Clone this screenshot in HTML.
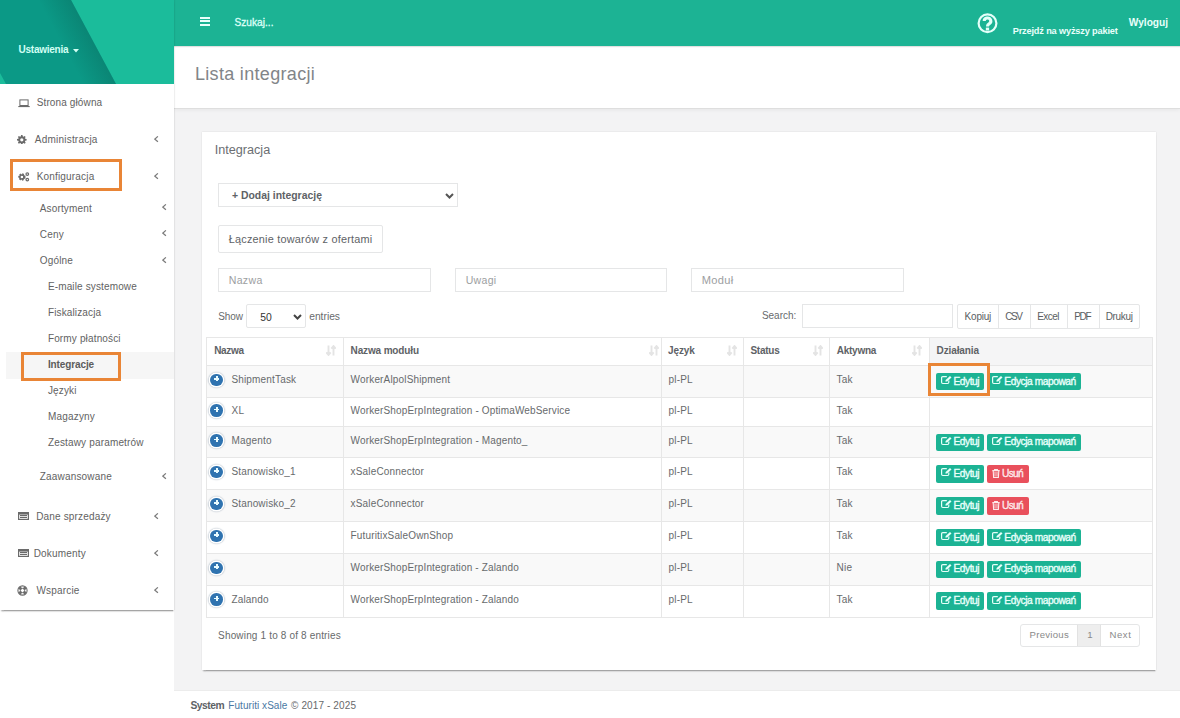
<!DOCTYPE html><html><head><meta charset="utf-8"><style>
*{box-sizing:border-box;margin:0;padding:0}
html,body{width:1180px;height:718px;overflow:hidden;background:#fff;font-family:"Liberation Sans",sans-serif;color:#676a6c}
.t{position:absolute;white-space:nowrap;line-height:1}
.r{position:absolute}
#side{position:absolute;left:0;top:0;width:174px;height:610px;background:#fff;box-shadow:0 2px 1.5px -0.5px rgba(0,0,0,.35),1px 0 1px rgba(0,0,0,.05);z-index:5}
#sidehead{position:absolute;left:0;top:0;width:174px;height:84px;background:#1bbc9b;overflow:hidden}
#top{position:absolute;left:174px;top:0;width:1006px;height:46px;background:#1cb394;box-shadow:0 1px 1px rgba(0,0,0,.12);z-index:3}
#phead{position:absolute;left:174px;top:46px;width:1006px;height:63px;background:#fff;border-bottom:1px solid #dedede;box-shadow:0 1px 4px rgba(0,0,0,.06);z-index:2}
#gray{position:absolute;left:174px;top:108px;width:1006px;height:582px;background:#f3f3f4}
#foot{position:absolute;left:174px;top:690px;width:1006px;height:28px;background:#fff;border-top:1px solid #ececec}
#card{position:absolute;left:202px;top:132px;width:954px;height:538px;background:#fff;box-shadow:0 2px 1.5px -0.5px rgba(0,0,0,.3),0 0 1.5px rgba(0,0,0,.13)}
.bx{position:absolute;border:1px solid #e5e6e7;background:#fff}
.ob{position:absolute;border:3px solid #e98536}
.chev{position:absolute}
.btn{position:absolute;height:17.6px;border-radius:2px;background:#1cb394}
.btnr{background:#e9505c}

.hl{position:absolute;height:1px;background:#e7e7e7}
.vl{position:absolute;width:1px;background:#e7e7e7}
</style></head><body><div id="gray"></div><div id="foot"></div><div id="top"></div><div id="phead"></div>
<div id="side"><div id="sidehead">
<svg width="174" height="84" style="position:absolute;left:0;top:0">
<defs><linearGradient id="g1" gradientUnits="userSpaceOnUse" x1="68" y1="55.7" x2="93.5" y2="42"><stop offset="0" stop-color="#0a6e60" stop-opacity="0"/><stop offset="1" stop-color="#0a6e60" stop-opacity="0.45"/></linearGradient></defs>
<polygon points="0,0 71,0 116,84 6,84 0,73" fill="#0b9986"/><polygon points="0,0 71,0 116,84 6,84 0,73" fill="url(#g1)"/></svg>
<div class="t" style="left:18.60px;top:44.90px;font-size:10.00px;color:#d2fff4;font-weight:bold;letter-spacing:-0.261px;">Ustawienia</div>
<svg class="r" style="left:73.2px;top:48.5px" width="6" height="4"><polygon points="0,0 6,0 3,3.5" fill="#d2fff4"/></svg>
</div>
<div class="t" style="left:36.70px;top:98.20px;font-size:10.00px;color:#626262;letter-spacing:0.129px;">Strona główna</div>
<svg class="r" style="left:17.5px;top:98.5px" width="12" height="9"><rect x="1.9" y="0.9" width="8.2" height="5.6" fill="none" stroke="#6b6b6b" stroke-width="1"/><rect x="0.3" y="7" width="11.4" height="1.1" fill="#6b6b6b"/></svg>
<div class="t" style="left:34.80px;top:135.20px;font-size:10.02px;color:#626262;letter-spacing:0.209px;">Administracja</div>
<svg class="r" style="left:17.4px;top:134.6px" width="9.6" height="9.6" viewBox="0 0 16 16"><path fill="#6b6b6b" d="M6.8 0h2.4l.4 2.2 1.3.6 1.9-1.3 1.7 1.7-1.3 1.9.6 1.3 2.2.4v2.4l-2.2.4-.6 1.3 1.3 1.9-1.7 1.7-1.9-1.3-1.3.6-.4 2.2H6.8l-.4-2.2-1.3-.6-1.9 1.3-1.7-1.7 1.3-1.9-.6-1.3L0 9.2V6.8l2.2-.4.6-1.3-1.3-1.9 1.7-1.7 1.9 1.3 1.3-.6zM8 5.3A2.7 2.7 0 1 0 8 10.7 2.7 2.7 0 1 0 8 5.3z"/></svg>
<svg class="r" style="left:154px;top:136px" width="5" height="7"><polyline points="3.9,0.4 0.9,3.1 3.9,5.8" fill="none" stroke="#7a7a7a" stroke-width="1.25"/></svg>
<div class="t" style="left:36.70px;top:171.80px;font-size:10.00px;color:#626262;letter-spacing:0.177px;">Konfiguracja</div>
<svg class="r" style="left:17.6px;top:171.5px" width="12" height="10" viewBox="0 0 12 10"><circle cx="3.9" cy="5" r="2.55" fill="none" stroke="#6b6b6b" stroke-width="2.2" stroke-dasharray="1.45 0.95"/><circle cx="3.9" cy="5" r="2.1" fill="none" stroke="#6b6b6b" stroke-width="1.5"/><circle cx="9.3" cy="2.1" r="1.3" fill="none" stroke="#6b6b6b" stroke-width="1.2"/><circle cx="9.3" cy="7.6" r="1.3" fill="none" stroke="#6b6b6b" stroke-width="1.2"/></svg>
<svg class="r" style="left:154px;top:173px" width="5" height="7"><polyline points="3.9,0.4 0.9,3.1 3.9,5.8" fill="none" stroke="#7a7a7a" stroke-width="1.25"/></svg>
<div class="t" style="left:39.70px;top:203.90px;font-size:10.00px;color:#626262;letter-spacing:0.169px;">Asortyment</div>
<svg class="r" style="left:162px;top:204px" width="5" height="7"><polyline points="3.9,0.4 0.9,3.1 3.9,5.8" fill="none" stroke="#7a7a7a" stroke-width="1.25"/></svg>
<div class="t" style="left:39.70px;top:229.90px;font-size:10.00px;color:#626262;letter-spacing:0.233px;">Ceny</div>
<svg class="r" style="left:162px;top:230px" width="5" height="7"><polyline points="3.9,0.4 0.9,3.1 3.9,5.8" fill="none" stroke="#7a7a7a" stroke-width="1.25"/></svg>
<div class="t" style="left:39.70px;top:256.00px;font-size:10.00px;color:#626262;letter-spacing:0.194px;">Ogólne</div>
<svg class="r" style="left:162px;top:257px" width="5" height="7"><polyline points="3.9,0.4 0.9,3.1 3.9,5.8" fill="none" stroke="#7a7a7a" stroke-width="1.25"/></svg>
<div class="r" style="left:6px;top:352px;width:168px;height:27px;background:#f6f6f6"></div>
<div class="t" style="left:47.90px;top:281.70px;font-size:10.00px;color:#626262;letter-spacing:0.138px;">E-maile systemowe</div>
<div class="t" style="left:47.90px;top:307.90px;font-size:10.00px;color:#626262;letter-spacing:0.141px;">Fiskalizacja</div>
<div class="t" style="left:47.90px;top:334.20px;font-size:10.00px;color:#626262;letter-spacing:0.151px;">Formy płatności</div>
<div class="t" style="left:47.90px;top:360.20px;font-size:10.00px;color:#5c5c5c;font-weight:bold;letter-spacing:-0.106px;">Integracje</div>
<div class="t" style="left:47.90px;top:386.10px;font-size:10.00px;color:#626262;letter-spacing:0.167px;">Języki</div>
<div class="t" style="left:47.90px;top:412.20px;font-size:10.00px;color:#626262;letter-spacing:0.195px;">Magazyny</div>
<div class="t" style="left:47.90px;top:437.90px;font-size:10.00px;color:#626262;letter-spacing:0.164px;">Zestawy parametrów</div>
<div class="t" style="left:39.70px;top:472.00px;font-size:10.00px;color:#626262;letter-spacing:0.191px;">Zaawansowane</div>
<svg class="r" style="left:162px;top:473px" width="5" height="7"><polyline points="3.9,0.4 0.9,3.1 3.9,5.8" fill="none" stroke="#7a7a7a" stroke-width="1.25"/></svg>
<div class="t" style="left:36.20px;top:512.00px;font-size:10.00px;color:#626262;letter-spacing:0.167px;">Dane sprzedaży</div>
<svg class="r" style="left:17.5px;top:512px" width="11" height="8"><rect x="0.6" y="0.6" width="9.8" height="6.8" fill="none" stroke="#6b6b6b" stroke-width="1.2"/><rect x="2" y="3" width="7" height="1.2" fill="#6b6b6b"/><rect x="2" y="5" width="7" height="1" fill="#6b6b6b"/><rect x="0.6" y="0.6" width="9.8" height="2" fill="#6b6b6b"/></svg>
<svg class="r" style="left:154px;top:513px" width="5" height="7"><polyline points="3.9,0.4 0.9,3.1 3.9,5.8" fill="none" stroke="#7a7a7a" stroke-width="1.25"/></svg>
<div class="t" style="left:33.70px;top:549.00px;font-size:10.00px;color:#626262;letter-spacing:0.190px;">Dokumenty</div>
<svg class="r" style="left:17.5px;top:549px" width="11" height="8"><rect x="0.6" y="0.6" width="9.8" height="6.8" fill="none" stroke="#6b6b6b" stroke-width="1.2"/><rect x="2" y="3" width="7" height="1.2" fill="#6b6b6b"/><rect x="2" y="5" width="7" height="1" fill="#6b6b6b"/><rect x="0.6" y="0.6" width="9.8" height="2" fill="#6b6b6b"/></svg>
<svg class="r" style="left:154px;top:550px" width="5" height="7"><polyline points="3.9,0.4 0.9,3.1 3.9,5.8" fill="none" stroke="#7a7a7a" stroke-width="1.25"/></svg>
<div class="t" style="left:36.50px;top:586.00px;font-size:10.00px;color:#626262;letter-spacing:0.179px;">Wsparcie</div>
<svg class="r" style="left:17.4px;top:584.8px" width="11" height="11" viewBox="0 0 11 11"><circle cx="5.5" cy="5.5" r="4.6" fill="none" stroke="#6b6b6b" stroke-width="1.1"/><circle cx="5.5" cy="5.5" r="2.1" fill="none" stroke="#6b6b6b" stroke-width="1"/><path d="M2.2 2.2l2 2M8.8 2.2l-2 2M2.2 8.8l2-2M8.8 8.8l-2-2" stroke="#6b6b6b" stroke-width="2.9"/></svg>
<svg class="r" style="left:154px;top:587px" width="5" height="7"><polyline points="3.9,0.4 0.9,3.1 3.9,5.8" fill="none" stroke="#7a7a7a" stroke-width="1.25"/></svg>
<div class="ob" style="left:10px;top:159px;width:112px;height:32px"></div>
<div class="ob" style="left:21px;top:352px;width:100px;height:28.5px"></div>
</div>
<div class="r" style="left:200px;top:17px;width:10.3px;height:2px;background:#e9fffb;z-index:4"></div>
<div class="r" style="left:200px;top:20.3px;width:10.3px;height:2px;background:#e9fffb;z-index:4"></div>
<div class="r" style="left:200px;top:23.5px;width:10.3px;height:2px;background:#e9fffb;z-index:4"></div>
<div style="position:absolute;left:0;top:0;z-index:4">
<div class="t" style="left:234.50px;top:17.80px;font-size:10.17px;color:#ddfff7;-webkit-text-stroke:0.3px #ddfff7;">Szukaj...</div>
<svg class="r" style="left:977px;top:13px" width="21" height="21" viewBox="0 0 21 21"><circle cx="10.5" cy="10.3" r="8.9" fill="none" stroke="#e4fff9" stroke-width="2.2"/><path d="M7.2 8.1a3.3 3.1 0 1 1 4.9 2.7c-1 .55-1.55 1.05-1.55 2.1v.5" fill="none" stroke="#e4fff9" stroke-width="3.1"/><rect x="8.85" y="14.6" width="3.3" height="2.9" fill="#e4fff9"/></svg>
<div class="t" style="left:1012.70px;top:26.60px;font-size:9.20px;color:#e9fffb;font-weight:bold;letter-spacing:-0.158px;">Przejdź na wyższy pakiet</div>
<div class="t" style="left:1128.80px;top:17.80px;font-size:10.16px;color:#e9fffb;font-weight:bold;">Wyloguj</div>
</div>
<div style="position:absolute;left:0;top:0;z-index:4">
<div class="t" style="left:194.90px;top:64.80px;font-size:18.03px;color:#828588;letter-spacing:0.320px;">Lista integracji</div>
</div>
<div id="card"></div>
<div class="t" style="left:214.70px;top:143.80px;font-size:12.65px;color:#6b6e72;">Integracja</div>
<div class="bx" style="left:218px;top:183px;width:240px;height:24px"></div>
<div class="t" style="left:232.00px;top:191.20px;font-size:10.42px;color:#5e6266;font-weight:bold;">+ Dodaj integrację</div>
<svg class="r" style="left:444.5px;top:192.5px" width="9" height="6"><polyline points="1,1 4.5,4.5 8,1" fill="none" stroke="#555" stroke-width="2"/></svg>
<div class="bx" style="left:218px;top:225px;width:165px;height:28px;border-radius:2px"></div>
<div class="t" style="left:228.70px;top:234.30px;font-size:10.88px;color:#5e6266;letter-spacing:0.221px;">Łączenie towarów z ofertami</div>
<div class="bx" style="left:218px;top:268px;width:213px;height:24px"></div>
<div class="t" style="left:228.70px;top:275.20px;font-size:10.57px;color:#9c9ea1;letter-spacing:0.337px;">Nazwa</div>
<div class="bx" style="left:455px;top:268px;width:212px;height:24px"></div>
<div class="t" style="left:465.70px;top:275.20px;font-size:10.53px;color:#9c9ea1;letter-spacing:0.305px;">Uwagi</div>
<div class="bx" style="left:691px;top:268px;width:213px;height:24px"></div>
<div class="t" style="left:701.70px;top:275.20px;font-size:11.10px;color:#9c9ea1;letter-spacing:0.315px;">Moduł</div>
<div class="t" style="left:218.20px;top:311.50px;font-size:10.00px;color:#676a6c;letter-spacing:-0.083px;">Show</div>
<div class="bx" style="left:246px;top:304px;width:60px;height:24px;border-radius:2px"></div>
<div class="t" style="left:260.20px;top:313.30px;font-size:10.36px;color:#333;">50</div>
<svg class="r" style="left:292.5px;top:314px" width="9" height="6"><polyline points="1,1 4.5,4.5 8,1" fill="none" stroke="#444" stroke-width="2"/></svg>
<div class="t" style="left:309.20px;top:311.50px;font-size:10.27px;color:#676a6c;">entries</div>
<div class="t" style="left:761.90px;top:311.30px;font-size:9.99px;color:#676a6c;">Search:</div>
<div class="bx" style="left:802px;top:304px;width:151px;height:24px"></div>
<div class="bx" style="left:957px;top:304px;width:183px;height:25px;border-radius:2px"></div>
<div class="vl" style="left:998px;top:305px;height:23px;background:#e5e6e7"></div>
<div class="vl" style="left:1030px;top:305px;height:23px;background:#e5e6e7"></div>
<div class="vl" style="left:1067px;top:305px;height:23px;background:#e5e6e7"></div>
<div class="vl" style="left:1099px;top:305px;height:23px;background:#e5e6e7"></div>
<div class="t" style="left:964.60px;top:311.90px;font-size:10.00px;color:#5a5e62;letter-spacing:-0.220px;">Kopiuj</div>
<div class="t" style="left:1005.20px;top:311.90px;font-size:10.00px;color:#5a5e62;letter-spacing:-1.375px;">CSV</div>
<div class="t" style="left:1037.20px;top:311.90px;font-size:10.00px;color:#5a5e62;letter-spacing:-0.562px;">Excel</div>
<div class="t" style="left:1074.20px;top:311.90px;font-size:10.00px;color:#5a5e62;letter-spacing:-1.350px;">PDF</div>
<div class="t" style="left:1105.70px;top:311.90px;font-size:10.00px;color:#5a5e62;letter-spacing:-0.320px;">Drukuj</div>
<div class="r" style="left:929px;top:337px;width:223px;height:28px;background:#f5f5f6"></div>
<div class="r" style="left:206px;top:365.4px;width:946px;height:31.8px;background:#f9f9f9"></div>
<div class="r" style="left:206px;top:426.4px;width:946px;height:31.0px;background:#f9f9f9"></div>
<div class="r" style="left:206px;top:489.4px;width:946px;height:32.0px;background:#f9f9f9"></div>
<div class="r" style="left:206px;top:553.3px;width:946px;height:31.6px;background:#f9f9f9"></div>
<div class="hl" style="left:206px;top:337.3px;width:947px"></div>
<div class="hl" style="left:206px;top:365.4px;width:947px"></div>
<div class="hl" style="left:206px;top:397.2px;width:947px"></div>
<div class="hl" style="left:206px;top:426.4px;width:947px"></div>
<div class="hl" style="left:206px;top:457.4px;width:947px"></div>
<div class="hl" style="left:206px;top:489.4px;width:947px"></div>
<div class="hl" style="left:206px;top:521.4px;width:947px"></div>
<div class="hl" style="left:206px;top:553.3px;width:947px"></div>
<div class="hl" style="left:206px;top:584.9px;width:947px"></div>
<div class="hl" style="left:206px;top:616.7px;width:947px"></div>
<div class="vl" style="left:206px;top:337px;height:280px"></div>
<div class="vl" style="left:343px;top:337px;height:280px"></div>
<div class="vl" style="left:661px;top:337px;height:280px"></div>
<div class="vl" style="left:743px;top:337px;height:280px"></div>
<div class="vl" style="left:829px;top:337px;height:280px"></div>
<div class="vl" style="left:929px;top:337px;height:280px"></div>
<div class="vl" style="left:1152px;top:337px;height:280px"></div>
<div class="t" style="left:214.20px;top:346.30px;font-size:10.00px;color:#5e6266;font-weight:bold;letter-spacing:-0.300px;">Nazwa</div>
<div class="t" style="left:350.60px;top:346.30px;font-size:10.00px;color:#5e6266;font-weight:bold;letter-spacing:-0.145px;">Nazwa modułu</div>
<div class="t" style="left:668.00px;top:346.30px;font-size:10.00px;color:#5e6266;font-weight:bold;letter-spacing:-0.100px;">Język</div>
<div class="t" style="left:750.40px;top:346.30px;font-size:10.00px;color:#5e6266;font-weight:bold;letter-spacing:-0.250px;">Status</div>
<div class="t" style="left:836.80px;top:346.30px;font-size:10.00px;color:#5e6266;font-weight:bold;letter-spacing:-0.267px;">Aktywna</div>
<div class="t" style="left:936.50px;top:346.30px;font-size:10.00px;color:#5e6266;font-weight:bold;letter-spacing:-0.094px;">Działania</div>
<svg class="r" style="left:326px;top:345px" width="10" height="11" viewBox="0 0 10 11"><path d="M2.5 0.5v9M0.3 7.3l2.2 2.6 2.2-2.6M7.5 10.5v-9M5.3 3.7l2.2-2.6 2.2 2.6" fill="none" stroke="#e4e4e4" stroke-width="1.9"/></svg>
<svg class="r" style="left:649px;top:345px" width="10" height="11" viewBox="0 0 10 11"><path d="M2.5 0.5v9M0.3 7.3l2.2 2.6 2.2-2.6M7.5 10.5v-9M5.3 3.7l2.2-2.6 2.2 2.6" fill="none" stroke="#e4e4e4" stroke-width="1.9"/></svg>
<svg class="r" style="left:727px;top:345px" width="10" height="11" viewBox="0 0 10 11"><path d="M2.5 0.5v9M0.3 7.3l2.2 2.6 2.2-2.6M7.5 10.5v-9M5.3 3.7l2.2-2.6 2.2 2.6" fill="none" stroke="#e4e4e4" stroke-width="1.9"/></svg>
<svg class="r" style="left:813px;top:345px" width="10" height="11" viewBox="0 0 10 11"><path d="M2.5 0.5v9M0.3 7.3l2.2 2.6 2.2-2.6M7.5 10.5v-9M5.3 3.7l2.2-2.6 2.2 2.6" fill="none" stroke="#e4e4e4" stroke-width="1.9"/></svg>
<svg class="r" style="left:912px;top:345px" width="10" height="11" viewBox="0 0 10 11"><path d="M2.5 0.5v9M0.3 7.3l2.2 2.6 2.2-2.6M7.5 10.5v-9M5.3 3.7l2.2-2.6 2.2 2.6" fill="none" stroke="#e4e4e4" stroke-width="1.9"/></svg>
<div class="r" style="left:210.2px;top:373.79999999999995px;width:12.6px;height:12.6px;border-radius:50%;background:#2f73b0;box-shadow:0 0 0 1.4px #fff,0 0 1.5px 1.6px #98a6b4"></div>
<div class="r" style="left:213.9px;top:377.99999999999994px;width:5.6px;height:1.8px;background:#e8fbff"></div>
<div class="r" style="left:215.8px;top:375.99999999999994px;width:1.8px;height:5.4px;background:#e8fbff"></div>
<div class="t" style="left:231.40px;top:374.50px;font-size:10.00px;color:#676a6c;letter-spacing:0.171px;">ShipmentTask</div>
<div class="t" style="left:350.60px;top:374.50px;font-size:10.00px;color:#676a6c;letter-spacing:0.161px;">WorkerAlpolShipment</div>
<div class="t" style="left:668.50px;top:374.50px;font-size:10.00px;color:#676a6c;letter-spacing:0.175px;">pl-PL</div>
<div class="t" style="left:836.60px;top:374.50px;font-size:10.00px;color:#676a6c;letter-spacing:0.234px;">Tak</div>
<div class="btn" style="left:936px;top:372.9px;width:48px"></div>
<svg class="r" style="left:941px;top:376.29999999999995px" width="11" height="9" viewBox="0 0 11 9"><path d="M5.8 0.6H1.8Q0.6 0.6 0.6 1.8V6.3Q0.6 7.5 1.8 7.5H6.6Q7.8 7.5 7.8 6.3V4.6" fill="none" stroke="#e6fff9" stroke-width="1.2"/><path d="M4.3 5.6l0.4-1.7 4.3-3.9 1.5 1.5-4.3 3.9z" fill="#e6fff9"/></svg>
<div class="t" style="left:953.50px;top:376.50px;font-size:10.20px;color:#e9fffb;letter-spacing:-0.471px;-webkit-text-stroke:0.35px #e9fffb;">Edytuj</div>
<div class="btn" style="left:987px;top:372.9px;width:94px"></div>
<svg class="r" style="left:992px;top:376.29999999999995px" width="11" height="9" viewBox="0 0 11 9"><path d="M5.8 0.6H1.8Q0.6 0.6 0.6 1.8V6.3Q0.6 7.5 1.8 7.5H6.6Q7.8 7.5 7.8 6.3V4.6" fill="none" stroke="#e6fff9" stroke-width="1.2"/><path d="M4.3 5.6l0.4-1.7 4.3-3.9 1.5 1.5-4.3 3.9z" fill="#e6fff9"/></svg>
<div class="t" style="left:1004.30px;top:376.50px;font-size:10.20px;color:#e9fffb;letter-spacing:-0.436px;-webkit-text-stroke:0.35px #e9fffb;">Edycja mapowań</div>
<div class="r" style="left:210.2px;top:404.29999999999995px;width:12.6px;height:12.6px;border-radius:50%;background:#2f73b0;box-shadow:0 0 0 1.4px #fff,0 0 1.5px 1.6px #98a6b4"></div>
<div class="r" style="left:213.9px;top:408.49999999999994px;width:5.6px;height:1.8px;background:#e8fbff"></div>
<div class="r" style="left:215.8px;top:406.49999999999994px;width:1.8px;height:5.4px;background:#e8fbff"></div>
<div class="t" style="left:231.40px;top:405.70px;font-size:10.00px;color:#676a6c;letter-spacing:0.368px;">XL</div>
<div class="t" style="left:350.60px;top:405.70px;font-size:10.00px;color:#676a6c;letter-spacing:0.152px;">WorkerShopErpIntegration - OptimaWebService</div>
<div class="t" style="left:668.50px;top:405.70px;font-size:10.00px;color:#676a6c;letter-spacing:0.175px;">pl-PL</div>
<div class="t" style="left:836.60px;top:405.70px;font-size:10.00px;color:#676a6c;letter-spacing:0.234px;">Tak</div>
<div class="r" style="left:210.2px;top:434.4px;width:12.6px;height:12.6px;border-radius:50%;background:#2f73b0;box-shadow:0 0 0 1.4px #fff,0 0 1.5px 1.6px #98a6b4"></div>
<div class="r" style="left:213.9px;top:438.59999999999997px;width:5.6px;height:1.8px;background:#e8fbff"></div>
<div class="r" style="left:215.8px;top:436.59999999999997px;width:1.8px;height:5.4px;background:#e8fbff"></div>
<div class="t" style="left:231.40px;top:435.80px;font-size:10.00px;color:#676a6c;letter-spacing:0.195px;">Magento</div>
<div class="t" style="left:350.60px;top:435.80px;font-size:10.00px;color:#676a6c;letter-spacing:0.152px;">WorkerShopErpIntegration - Magento_</div>
<div class="t" style="left:668.50px;top:435.80px;font-size:10.00px;color:#676a6c;letter-spacing:0.175px;">pl-PL</div>
<div class="t" style="left:836.60px;top:435.80px;font-size:10.00px;color:#676a6c;letter-spacing:0.234px;">Tak</div>
<div class="btn" style="left:936px;top:433.5px;width:48px"></div>
<svg class="r" style="left:941px;top:436.9px" width="11" height="9" viewBox="0 0 11 9"><path d="M5.8 0.6H1.8Q0.6 0.6 0.6 1.8V6.3Q0.6 7.5 1.8 7.5H6.6Q7.8 7.5 7.8 6.3V4.6" fill="none" stroke="#e6fff9" stroke-width="1.2"/><path d="M4.3 5.6l0.4-1.7 4.3-3.9 1.5 1.5-4.3 3.9z" fill="#e6fff9"/></svg>
<div class="t" style="left:953.50px;top:437.10px;font-size:10.20px;color:#e9fffb;letter-spacing:-0.471px;-webkit-text-stroke:0.35px #e9fffb;">Edytuj</div>
<div class="btn" style="left:987px;top:433.5px;width:94px"></div>
<svg class="r" style="left:992px;top:436.9px" width="11" height="9" viewBox="0 0 11 9"><path d="M5.8 0.6H1.8Q0.6 0.6 0.6 1.8V6.3Q0.6 7.5 1.8 7.5H6.6Q7.8 7.5 7.8 6.3V4.6" fill="none" stroke="#e6fff9" stroke-width="1.2"/><path d="M4.3 5.6l0.4-1.7 4.3-3.9 1.5 1.5-4.3 3.9z" fill="#e6fff9"/></svg>
<div class="t" style="left:1004.30px;top:437.10px;font-size:10.20px;color:#e9fffb;letter-spacing:-0.436px;-webkit-text-stroke:0.35px #e9fffb;">Edycja mapowań</div>
<div class="r" style="left:210.2px;top:465.9px;width:12.6px;height:12.6px;border-radius:50%;background:#2f73b0;box-shadow:0 0 0 1.4px #fff,0 0 1.5px 1.6px #98a6b4"></div>
<div class="r" style="left:213.9px;top:470.09999999999997px;width:5.6px;height:1.8px;background:#e8fbff"></div>
<div class="r" style="left:215.8px;top:468.09999999999997px;width:1.8px;height:5.4px;background:#e8fbff"></div>
<div class="t" style="left:231.40px;top:467.30px;font-size:10.00px;color:#676a6c;letter-spacing:0.170px;">Stanowisko_1</div>
<div class="t" style="left:350.60px;top:467.30px;font-size:10.00px;color:#676a6c;letter-spacing:0.164px;">xSaleConnector</div>
<div class="t" style="left:668.50px;top:467.30px;font-size:10.00px;color:#676a6c;letter-spacing:0.175px;">pl-PL</div>
<div class="t" style="left:836.60px;top:467.30px;font-size:10.00px;color:#676a6c;letter-spacing:0.234px;">Tak</div>
<div class="btn" style="left:936px;top:465.0px;width:48px"></div>
<svg class="r" style="left:941px;top:468.4px" width="11" height="9" viewBox="0 0 11 9"><path d="M5.8 0.6H1.8Q0.6 0.6 0.6 1.8V6.3Q0.6 7.5 1.8 7.5H6.6Q7.8 7.5 7.8 6.3V4.6" fill="none" stroke="#e6fff9" stroke-width="1.2"/><path d="M4.3 5.6l0.4-1.7 4.3-3.9 1.5 1.5-4.3 3.9z" fill="#e6fff9"/></svg>
<div class="t" style="left:953.50px;top:468.60px;font-size:10.20px;color:#e9fffb;letter-spacing:-0.471px;-webkit-text-stroke:0.35px #e9fffb;">Edytuj</div>
<div class="btn btnr" style="left:987px;top:465.0px;width:42px"></div>
<svg class="r" style="left:992px;top:469.0px" width="8" height="9" viewBox="0 0 8 9"><path d="M0.3 1.6h7.4M2.6 1.6V0.6h2.8v1M1.2 1.8l.4 6.6h4.8l.4-6.6" fill="none" stroke="#fde9ea" stroke-width="1.1"/><path d="M3 3v4M5 3v4" stroke="#fde9ea" stroke-width="0.9"/></svg>
<div class="t" style="left:1002.10px;top:468.60px;font-size:10.20px;color:#fde9ea;letter-spacing:-0.772px;-webkit-text-stroke:0.35px #fde9ea;">Usuń</div>
<div class="r" style="left:210.2px;top:497.9px;width:12.6px;height:12.6px;border-radius:50%;background:#2f73b0;box-shadow:0 0 0 1.4px #fff,0 0 1.5px 1.6px #98a6b4"></div>
<div class="r" style="left:213.9px;top:502.09999999999997px;width:5.6px;height:1.8px;background:#e8fbff"></div>
<div class="r" style="left:215.8px;top:500.09999999999997px;width:1.8px;height:5.4px;background:#e8fbff"></div>
<div class="t" style="left:231.40px;top:499.30px;font-size:10.00px;color:#676a6c;letter-spacing:0.170px;">Stanowisko_2</div>
<div class="t" style="left:350.60px;top:499.30px;font-size:10.00px;color:#676a6c;letter-spacing:0.164px;">xSaleConnector</div>
<div class="t" style="left:668.50px;top:499.30px;font-size:10.00px;color:#676a6c;letter-spacing:0.175px;">pl-PL</div>
<div class="t" style="left:836.60px;top:499.30px;font-size:10.00px;color:#676a6c;letter-spacing:0.234px;">Tak</div>
<div class="btn" style="left:936px;top:497.0px;width:48px"></div>
<svg class="r" style="left:941px;top:500.4px" width="11" height="9" viewBox="0 0 11 9"><path d="M5.8 0.6H1.8Q0.6 0.6 0.6 1.8V6.3Q0.6 7.5 1.8 7.5H6.6Q7.8 7.5 7.8 6.3V4.6" fill="none" stroke="#e6fff9" stroke-width="1.2"/><path d="M4.3 5.6l0.4-1.7 4.3-3.9 1.5 1.5-4.3 3.9z" fill="#e6fff9"/></svg>
<div class="t" style="left:953.50px;top:500.60px;font-size:10.20px;color:#e9fffb;letter-spacing:-0.471px;-webkit-text-stroke:0.35px #e9fffb;">Edytuj</div>
<div class="btn btnr" style="left:987px;top:497.0px;width:42px"></div>
<svg class="r" style="left:992px;top:501.0px" width="8" height="9" viewBox="0 0 8 9"><path d="M0.3 1.6h7.4M2.6 1.6V0.6h2.8v1M1.2 1.8l.4 6.6h4.8l.4-6.6" fill="none" stroke="#fde9ea" stroke-width="1.1"/><path d="M3 3v4M5 3v4" stroke="#fde9ea" stroke-width="0.9"/></svg>
<div class="t" style="left:1002.10px;top:500.60px;font-size:10.20px;color:#fde9ea;letter-spacing:-0.772px;-webkit-text-stroke:0.35px #fde9ea;">Usuń</div>
<div class="r" style="left:210.2px;top:529.8499999999999px;width:12.6px;height:12.6px;border-radius:50%;background:#2f73b0;box-shadow:0 0 0 1.4px #fff,0 0 1.5px 1.6px #98a6b4"></div>
<div class="r" style="left:213.9px;top:534.0499999999998px;width:5.6px;height:1.8px;background:#e8fbff"></div>
<div class="r" style="left:215.8px;top:532.0499999999998px;width:1.8px;height:5.4px;background:#e8fbff"></div>
<div class="t" style="left:350.60px;top:531.25px;font-size:10.00px;color:#676a6c;letter-spacing:0.157px;">FuturitixSaleOwnShop</div>
<div class="t" style="left:668.50px;top:531.25px;font-size:10.00px;color:#676a6c;letter-spacing:0.175px;">pl-PL</div>
<div class="t" style="left:836.60px;top:531.25px;font-size:10.00px;color:#676a6c;letter-spacing:0.234px;">Tak</div>
<div class="btn" style="left:936px;top:528.9px;width:48px"></div>
<svg class="r" style="left:941px;top:532.3px" width="11" height="9" viewBox="0 0 11 9"><path d="M5.8 0.6H1.8Q0.6 0.6 0.6 1.8V6.3Q0.6 7.5 1.8 7.5H6.6Q7.8 7.5 7.8 6.3V4.6" fill="none" stroke="#e6fff9" stroke-width="1.2"/><path d="M4.3 5.6l0.4-1.7 4.3-3.9 1.5 1.5-4.3 3.9z" fill="#e6fff9"/></svg>
<div class="t" style="left:953.50px;top:532.50px;font-size:10.20px;color:#e9fffb;letter-spacing:-0.471px;-webkit-text-stroke:0.35px #e9fffb;">Edytuj</div>
<div class="btn" style="left:987px;top:528.9px;width:94px"></div>
<svg class="r" style="left:992px;top:532.3px" width="11" height="9" viewBox="0 0 11 9"><path d="M5.8 0.6H1.8Q0.6 0.6 0.6 1.8V6.3Q0.6 7.5 1.8 7.5H6.6Q7.8 7.5 7.8 6.3V4.6" fill="none" stroke="#e6fff9" stroke-width="1.2"/><path d="M4.3 5.6l0.4-1.7 4.3-3.9 1.5 1.5-4.3 3.9z" fill="#e6fff9"/></svg>
<div class="t" style="left:1004.30px;top:532.50px;font-size:10.20px;color:#e9fffb;letter-spacing:-0.436px;-webkit-text-stroke:0.35px #e9fffb;">Edycja mapowań</div>
<div class="r" style="left:210.2px;top:561.5999999999999px;width:12.6px;height:12.6px;border-radius:50%;background:#2f73b0;box-shadow:0 0 0 1.4px #fff,0 0 1.5px 1.6px #98a6b4"></div>
<div class="r" style="left:213.9px;top:565.7999999999998px;width:5.6px;height:1.8px;background:#e8fbff"></div>
<div class="r" style="left:215.8px;top:563.7999999999998px;width:1.8px;height:5.4px;background:#e8fbff"></div>
<div class="t" style="left:350.60px;top:563.00px;font-size:10.00px;color:#676a6c;letter-spacing:0.148px;">WorkerShopErpIntegration - Zalando</div>
<div class="t" style="left:668.50px;top:563.00px;font-size:10.00px;color:#676a6c;letter-spacing:0.175px;">pl-PL</div>
<div class="t" style="left:836.60px;top:563.00px;font-size:10.00px;color:#676a6c;letter-spacing:0.225px;">Nie</div>
<div class="btn" style="left:936px;top:560.7px;width:48px"></div>
<svg class="r" style="left:941px;top:564.1px" width="11" height="9" viewBox="0 0 11 9"><path d="M5.8 0.6H1.8Q0.6 0.6 0.6 1.8V6.3Q0.6 7.5 1.8 7.5H6.6Q7.8 7.5 7.8 6.3V4.6" fill="none" stroke="#e6fff9" stroke-width="1.2"/><path d="M4.3 5.6l0.4-1.7 4.3-3.9 1.5 1.5-4.3 3.9z" fill="#e6fff9"/></svg>
<div class="t" style="left:953.50px;top:564.30px;font-size:10.20px;color:#e9fffb;letter-spacing:-0.471px;-webkit-text-stroke:0.35px #e9fffb;">Edytuj</div>
<div class="btn" style="left:987px;top:560.7px;width:94px"></div>
<svg class="r" style="left:992px;top:564.1px" width="11" height="9" viewBox="0 0 11 9"><path d="M5.8 0.6H1.8Q0.6 0.6 0.6 1.8V6.3Q0.6 7.5 1.8 7.5H6.6Q7.8 7.5 7.8 6.3V4.6" fill="none" stroke="#e6fff9" stroke-width="1.2"/><path d="M4.3 5.6l0.4-1.7 4.3-3.9 1.5 1.5-4.3 3.9z" fill="#e6fff9"/></svg>
<div class="t" style="left:1004.30px;top:564.30px;font-size:10.20px;color:#e9fffb;letter-spacing:-0.436px;-webkit-text-stroke:0.35px #e9fffb;">Edycja mapowań</div>
<div class="r" style="left:210.2px;top:593.3px;width:12.6px;height:12.6px;border-radius:50%;background:#2f73b0;box-shadow:0 0 0 1.4px #fff,0 0 1.5px 1.6px #98a6b4"></div>
<div class="r" style="left:213.9px;top:597.4999999999999px;width:5.6px;height:1.8px;background:#e8fbff"></div>
<div class="r" style="left:215.8px;top:595.4999999999999px;width:1.8px;height:5.4px;background:#e8fbff"></div>
<div class="t" style="left:231.40px;top:594.70px;font-size:10.00px;color:#676a6c;letter-spacing:0.181px;">Zalando</div>
<div class="t" style="left:350.60px;top:594.70px;font-size:10.00px;color:#676a6c;letter-spacing:0.148px;">WorkerShopErpIntegration - Zalando</div>
<div class="t" style="left:668.50px;top:594.70px;font-size:10.00px;color:#676a6c;letter-spacing:0.175px;">pl-PL</div>
<div class="t" style="left:836.60px;top:594.70px;font-size:10.00px;color:#676a6c;letter-spacing:0.234px;">Tak</div>
<div class="btn" style="left:936px;top:592.4px;width:48px"></div>
<svg class="r" style="left:941px;top:595.8px" width="11" height="9" viewBox="0 0 11 9"><path d="M5.8 0.6H1.8Q0.6 0.6 0.6 1.8V6.3Q0.6 7.5 1.8 7.5H6.6Q7.8 7.5 7.8 6.3V4.6" fill="none" stroke="#e6fff9" stroke-width="1.2"/><path d="M4.3 5.6l0.4-1.7 4.3-3.9 1.5 1.5-4.3 3.9z" fill="#e6fff9"/></svg>
<div class="t" style="left:953.50px;top:596.00px;font-size:10.20px;color:#e9fffb;letter-spacing:-0.471px;-webkit-text-stroke:0.35px #e9fffb;">Edytuj</div>
<div class="btn" style="left:987px;top:592.4px;width:94px"></div>
<svg class="r" style="left:992px;top:595.8px" width="11" height="9" viewBox="0 0 11 9"><path d="M5.8 0.6H1.8Q0.6 0.6 0.6 1.8V6.3Q0.6 7.5 1.8 7.5H6.6Q7.8 7.5 7.8 6.3V4.6" fill="none" stroke="#e6fff9" stroke-width="1.2"/><path d="M4.3 5.6l0.4-1.7 4.3-3.9 1.5 1.5-4.3 3.9z" fill="#e6fff9"/></svg>
<div class="t" style="left:1004.30px;top:596.00px;font-size:10.20px;color:#e9fffb;letter-spacing:-0.436px;-webkit-text-stroke:0.35px #e9fffb;">Edycja mapowań</div>
<div class="ob" style="left:928px;top:363px;width:62px;height:33px"></div>
<div class="t" style="left:218.10px;top:631.20px;font-size:10.00px;color:#676a6c;letter-spacing:0.162px;">Showing 1 to 8 of 8 entries</div>
<div class="bx" style="left:1020px;top:624px;width:120px;height:23px;border-radius:3px"></div>
<div class="r" style="left:1077px;top:625px;width:24px;height:21px;background:#eee;border-left:1px solid #e2e2e2;border-right:1px solid #e2e2e2"></div>
<div class="t" style="left:1029.60px;top:630.30px;font-size:9.60px;color:#8a8a8a;letter-spacing:0.251px;">Previous</div>
<div class="t" style="left:1087.30px;top:630.30px;font-size:9.60px;color:#8a8a8a;">1</div>
<div class="t" style="left:1109.60px;top:630.30px;font-size:9.60px;color:#8a8a8a;letter-spacing:0.491px;">Next</div>
<div class="t" style="left:190.50px;top:701.00px;font-size:10.30px;color:#5e6266;font-weight:bold;letter-spacing:-0.5px;">System</div>
<div class="t" style="left:228.30px;top:701.00px;font-size:10.00px;color:#4a78a3;letter-spacing:0.050px;">Futuriti xSale</div>
<div class="t" style="left:291.00px;top:701.00px;font-size:10.00px;color:#676a6c;letter-spacing:0.121px;">© 2017 - 2025</div></body></html>
